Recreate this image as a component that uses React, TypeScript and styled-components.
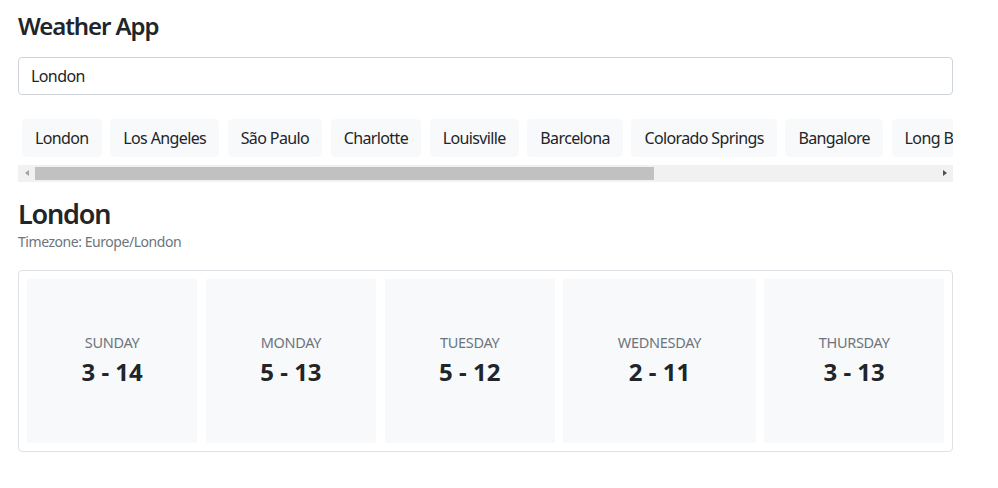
import React from "react";
import styled, { createGlobalStyle } from "styled-components";

const GlobalStyle = createGlobalStyle`
  * { box-sizing: border-box; }
  body {
    margin: 0;
    background: #ffffff;
    color: #212529;
    font-family: "Noto Sans", "Open Sans", sans-serif;
    font-size: 16px;
    line-height: 1.5;
  }
`;

const Page = styled.div`
  width: 935px;
  margin-left: 18px;
  padding-top: 12px;
`;

const Title = styled.h4`
  margin: 0 0 16px;
  font-size: 24px;
  line-height: 28.8px;
  font-weight: 600;
  letter-spacing: -1.1px;
`;

const SearchInput = styled.input`
  display: block;
  width: 100%;
  height: 38px;
  padding: 6px 12px;
  border: 1px solid #ced4da;
  border-radius: 4px;
  font: inherit;
  font-size: 16px;
  letter-spacing: -0.6px;
  color: #212529;
  outline: none;
`;

const ChipScroller = styled.div`
  margin-top: 24px;
  padding-bottom: 8px;
  display: flex;
  overflow: hidden;
`;

const Chip = styled.button`
  flex: none;
  margin: 0 4.3px;
  padding: 6px 12px;
  border: 1px solid #f8f9fa;
  border-radius: 4px;
  background: #f8f9fa;
  color: #212529;
  font: inherit;
  font-size: 16px;
  line-height: 24px;
  letter-spacing: -0.62px;
  white-space: nowrap;
  cursor: pointer;
  &:first-child { margin-left: 4px; }
`;

const ScrollBar = styled.div`
  display: flex;
  height: 17px;
  background: #f1f1f1;
`;

const ScrollButton = styled.div<{ $dir: "left" | "right" }>`
  flex: none;
  width: 17px;
  display: flex;
  align-items: center;
  justify-content: center;
  &::before {
    content: "";
    width: 0;
    height: 0;
    border-top: 3.5px solid transparent;
    border-bottom: 3.5px solid transparent;
    ${(p) =>
      p.$dir === "left"
        ? "border-right: 4px solid #a3a3a3;"
        : "border-left: 4px solid #505050;"}
  }
`;

const ScrollTrack = styled.div`
  flex: 1;
  display: flex;
  align-items: center;
`;

const ScrollThumb = styled.div<{ $width: number }>`
  width: ${(p) => p.$width}px;
  height: 13px;
  background: #c1c1c1;
`;

const CityName = styled.h3`
  margin: 16px 0 0;
  font-size: 27px;
  line-height: 32.6px;
  font-weight: 600;
  letter-spacing: -1.2px;
`;

const Timezone = styled.small`
  display: block;
  margin-top: 1px;
  font-size: 14px;
  line-height: 21px;
  letter-spacing: -0.45px;
  color: #6c757d;
`;

const ForecastCard = styled.div`
  margin-top: 18px;
  display: flex;
  gap: 8.6px;
  padding: 8px;
  border: 1px solid #dee2e6;
  border-radius: 4px;
`;

const DayBox = styled.div`
  flex: 1 1 auto;
  padding: 51px 12px 56px;
  background: #f8f9fa;
  text-align: center;
`;

const DayName = styled.div`
  font-size: 14.5px;
  line-height: 24px;
  letter-spacing: -0.3px;
  color: #6c757d;
  text-transform: uppercase;
`;

const TempRange = styled.div`
  margin-top: 4px;
  font-size: 24px;
  line-height: 28.8px;
  font-weight: 700;
  color: #212529;
`;

const cities = [
  "London",
  "Los Angeles",
  "São Paulo",
  "Charlotte",
  "Louisville",
  "Barcelona",
  "Colorado Springs",
  "Bangalore",
  "Long Beach",
];

const forecast = [
  { day: "Sunday", min: 3, max: 14 },
  { day: "Monday", min: 5, max: 13 },
  { day: "Tuesday", min: 5, max: 12 },
  { day: "Wednesday", min: 2, max: 11 },
  { day: "Thursday", min: 3, max: 13 },
];

export default function App() {
  return (
    <>
      <GlobalStyle />
      <Page>
        <Title>Weather App</Title>
        <SearchInput defaultValue="London" />
        <ChipScroller>
          {cities.map((c) => (
            <Chip key={c}>{c}</Chip>
          ))}
        </ChipScroller>
        <ScrollBar>
          <ScrollButton $dir="left" />
          <ScrollTrack>
            <ScrollThumb $width={619} />
          </ScrollTrack>
          <ScrollButton $dir="right" />
        </ScrollBar>
        <CityName>London</CityName>
        <Timezone>Timezone: Europe/London</Timezone>
        <ForecastCard>
          {forecast.map((f) => (
            <DayBox key={f.day}>
              <DayName>{f.day}</DayName>
              <TempRange>
                {f.min} - {f.max}
              </TempRange>
            </DayBox>
          ))}
        </ForecastCard>
      </Page>
    </>
  );
}
